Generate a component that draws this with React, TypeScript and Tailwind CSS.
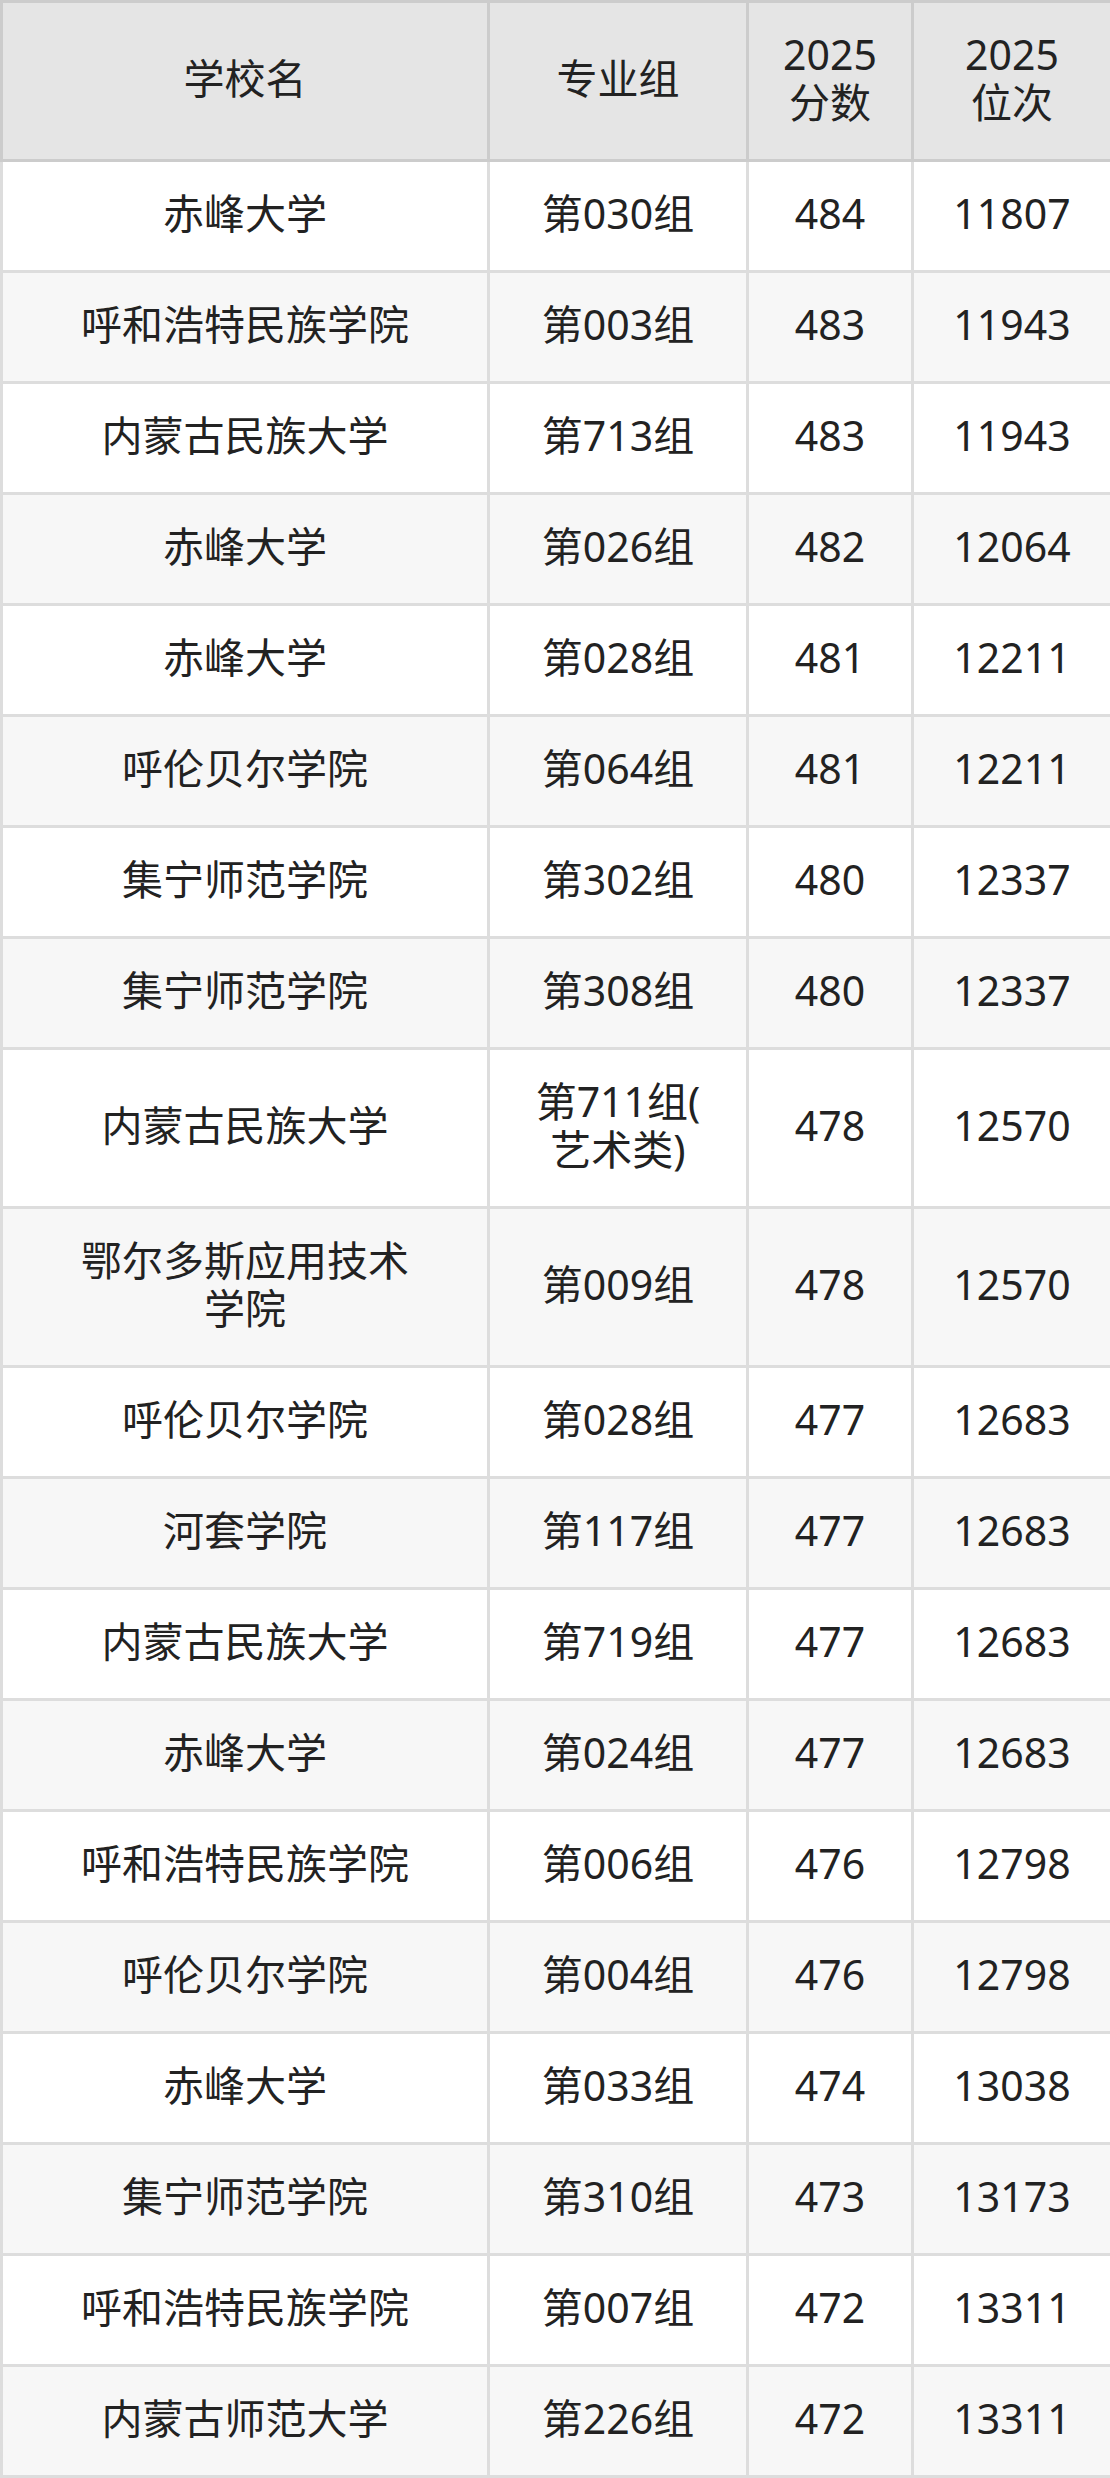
const rows: [string, string, string, string][] = [
  ["赤峰大学", "第030组", "484", "11807"],
  ["呼和浩特民族学院", "第003组", "483", "11943"],
  ["内蒙古民族大学", "第713组", "483", "11943"],
  ["赤峰大学", "第026组", "482", "12064"],
  ["赤峰大学", "第028组", "481", "12211"],
  ["呼伦贝尔学院", "第064组", "481", "12211"],
  ["集宁师范学院", "第302组", "480", "12337"],
  ["集宁师范学院", "第308组", "480", "12337"],
  ["内蒙古民族大学", "第711组(艺术类)", "478", "12570"],
  ["鄂尔多斯应用技术学院", "第009组", "478", "12570"],
  ["呼伦贝尔学院", "第028组", "477", "12683"],
  ["河套学院", "第117组", "477", "12683"],
  ["内蒙古民族大学", "第719组", "477", "12683"],
  ["赤峰大学", "第024组", "477", "12683"],
  ["呼和浩特民族学院", "第006组", "476", "12798"],
  ["呼伦贝尔学院", "第004组", "476", "12798"],
  ["赤峰大学", "第033组", "474", "13038"],
  ["集宁师范学院", "第310组", "473", "13173"],
  ["呼和浩特民族学院", "第007组", "472", "13311"],
  ["内蒙古师范大学", "第226组", "472", "13311"],
];

const th = "border-[3px] border-[#cccccc] px-3 pt-[27px] pb-[33px] font-normal align-middle";
const td = "border-[3px] border-[#dddddd] px-3 pt-[27px] pb-[33px] align-middle";

export default function App() {
  return (
    <div className="w-[1110px] bg-white">
      <table
        className="w-[1110px] table-fixed border-collapse text-center text-[41px] leading-[48px] text-[#222222]"
        style={{ fontFamily: '"Noto Sans", "Noto Sans CJK SC", sans-serif' }}
      >
        <colgroup>
          <col className="w-[487px]" />
          <col className="w-[259px]" />
          <col className="w-[165px]" />
          <col className="w-[199px]" />
        </colgroup>
        <thead>
          <tr className="bg-[#e5e5e5]">
            <th className={th}>学校名</th>
            <th className={th}>专业组</th>
            <th className={th}>
              2025
              <br />
              分数
            </th>
            <th className={th}>
              2025
              <br />
              位次
            </th>
          </tr>
        </thead>
        <tbody>
          {rows.map((r, i) => (
            <tr key={i} className={i % 2 === 1 ? "bg-[#f7f7f7]" : "bg-white"}>
              <td className={td}>
                {r[0] === "鄂尔多斯应用技术学院" ? (
                  <>
                    鄂尔多斯应用技术
                    <br />
                    学院
                  </>
                ) : (
                  r[0]
                )}
              </td>
              <td className={td}>
                {r[1] === "第711组(艺术类)" ? (
                  <>
                    第711组(
                    <br />
                    艺术类)
                  </>
                ) : (
                  r[1]
                )}
              </td>
              <td className={td}>{r[2]}</td>
              <td className={td}>{r[3]}</td>
            </tr>
          ))}
        </tbody>
      </table>
    </div>
  );
}
